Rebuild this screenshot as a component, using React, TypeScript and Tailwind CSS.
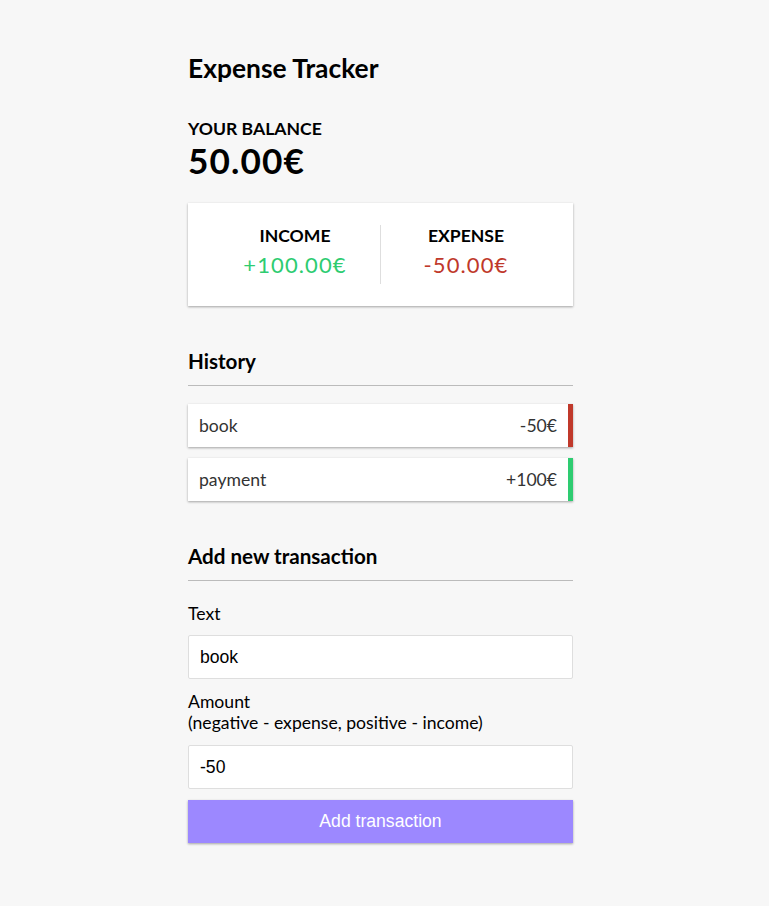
import React from "react";

export default function App() {
  const shadow = "shadow-[0_1px_3px_rgba(0,0,0,0.12),0_1px_2px_rgba(0,0,0,0.24)]";
  return (
    <div className="min-h-screen bg-[#f7f7f7] flex justify-center font-['Lato',sans-serif] text-black">
      <div className="w-[385px] mr-[8px] pt-[53px] pb-[33px]">
        <h2 className="text-[26.4px] leading-[31.7px] font-bold m-0">Expense Tracker</h2>
        <h4 className="mt-[33px] text-[17.6px] leading-[21.1px] font-bold uppercase">Your Balance</h4>
        <h1 className="text-[35.2px] leading-[42.2px] font-bold tracking-[1.1px]">50.00€</h1>

        <div className={`mt-[22px] bg-white ${shadow} p-[22px] flex`}>
          <div className="flex-1 text-center border-r border-[#dedede]">
            <h4 className="text-[17.6px] leading-[21.1px] font-bold uppercase">Income</h4>
            <p className="my-[5.5px] text-[22px] leading-[26.4px] tracking-[1.1px] text-[#2ecc71]">+100.00€</p>
          </div>
          <div className="flex-1 text-center">
            <h4 className="text-[17.6px] leading-[21.1px] font-bold uppercase">Expense</h4>
            <p className="my-[5.5px] text-[22px] leading-[26.4px] tracking-[1.1px] text-[#c0392b]">-50.00€</p>
          </div>
        </div>

        <h3 className="mt-[43.5px] text-[20.6px] leading-[24.7px] font-bold pb-[11px] border-b border-[#bbb]">History</h3>
        <ul className="mt-[18px] flex flex-col gap-[11px]">
          <li className={`bg-white ${shadow} text-[#333] flex justify-between p-[11px] text-[17.6px] leading-[21.1px] border-r-[5.5px] border-[#c0392b]`}>
            <span>book</span>
            <span>-50€</span>
          </li>
          <li className={`bg-white ${shadow} text-[#333] flex justify-between p-[11px] text-[17.6px] leading-[21.1px] border-r-[5.5px] border-[#2ecc71]`}>
            <span>payment</span>
            <span>+100€</span>
          </li>
        </ul>

        <h3 className="mt-[43.5px] text-[20.6px] leading-[24.7px] font-bold pb-[11px] border-b border-[#bbb]">Add new transaction</h3>
        <div className="mt-[22px] text-[17.6px] leading-[21.1px]">
          <label className="block">Text</label>
          <input
            type="text"
            defaultValue="book"
            className="mt-[11px] block w-full bg-white border-[1.1px] border-[#dedede] rounded-[2px] p-[11px] text-[17.6px] leading-[20.2px] font-['Liberation_Sans',Arial,sans-serif] outline-none"
          />
          <label className="block mt-[11.5px]">
            Amount <br />
            (negative - expense, positive - income)
          </label>
          <input
            type="text"
            defaultValue="-50"
            className="mt-[11.5px] block w-full bg-white border-[1.1px] border-[#dedede] rounded-[2px] p-[11px] text-[17.6px] leading-[20.2px] font-['Liberation_Sans',Arial,sans-serif] outline-none"
          />
          <button
            className={`mt-[11.5px] block w-full bg-[#9c88ff] ${shadow} text-white p-[11px] text-[17.6px] leading-[21px] font-['Liberation_Sans',Arial,sans-serif]`}
          >
            Add transaction
          </button>
        </div>
      </div>
    </div>
  );
}
